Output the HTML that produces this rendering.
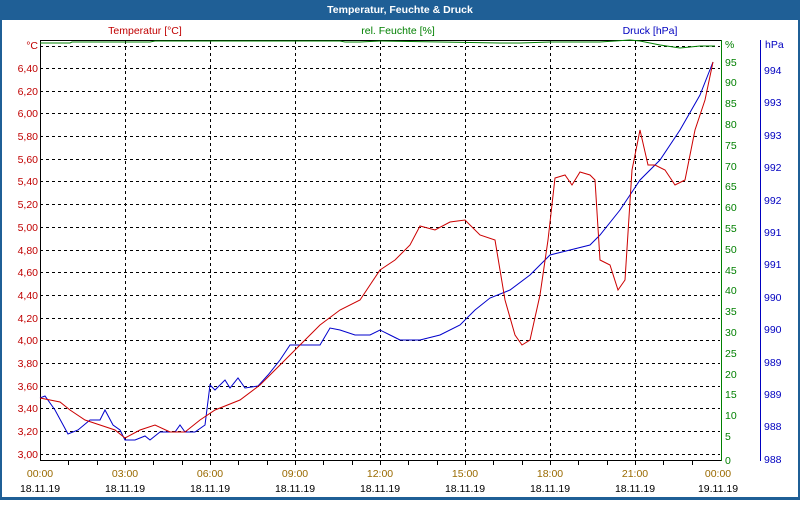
<!DOCTYPE html>
<html><head><meta charset="utf-8"><style>
body{margin:0;width:800px;height:500px;overflow:hidden;background:#fff;font-family:"Liberation Sans",sans-serif}
</style></head><body>
<svg width="800" height="500" xmlns="http://www.w3.org/2000/svg" font-family="Liberation Sans, sans-serif" font-size="10.5">
<rect x="0" y="0" width="800" height="500" fill="#1f5f96"/>
<rect x="2" y="20" width="796" height="477" fill="#fff"/>
<text x="400" y="13" text-anchor="middle" fill="#fff" font-weight="bold" font-size="10.5">Temperatur, Feuchte &amp; Druck</text>
<text x="145" y="34" text-anchor="middle" fill="#c00000">Temperatur [°C]</text>
<text x="398" y="34" text-anchor="middle" fill="#008000">rel. Feuchte [%]</text>
<text x="650" y="34" text-anchor="middle" fill="#0000c0">Druck [hPa]</text>
<g stroke="#000" stroke-dasharray="3,3" stroke-width="1">
<line x1="40" y1="46.5" x2="720" y2="46.5"/><line x1="40" y1="68.5" x2="720" y2="68.5"/><line x1="40" y1="91.5" x2="720" y2="91.5"/><line x1="40" y1="113.5" x2="720" y2="113.5"/><line x1="40" y1="136.5" x2="720" y2="136.5"/><line x1="40" y1="159.5" x2="720" y2="159.5"/><line x1="40" y1="181.5" x2="720" y2="181.5"/><line x1="40" y1="204.5" x2="720" y2="204.5"/><line x1="40" y1="227.5" x2="720" y2="227.5"/><line x1="40" y1="250.5" x2="720" y2="250.5"/><line x1="40" y1="272.5" x2="720" y2="272.5"/><line x1="40" y1="295.5" x2="720" y2="295.5"/><line x1="40" y1="318.5" x2="720" y2="318.5"/><line x1="40" y1="340.5" x2="720" y2="340.5"/><line x1="40" y1="363.5" x2="720" y2="363.5"/><line x1="40" y1="386.5" x2="720" y2="386.5"/><line x1="40" y1="408.5" x2="720" y2="408.5"/><line x1="40" y1="431.5" x2="720" y2="431.5"/><line x1="40" y1="454.5" x2="720" y2="454.5"/>
<line x1="125.5" y1="41" x2="125.5" y2="460"/><line x1="210.5" y1="41" x2="210.5" y2="460"/><line x1="295.5" y1="41" x2="295.5" y2="460"/><line x1="380.5" y1="41" x2="380.5" y2="460"/><line x1="465.5" y1="41" x2="465.5" y2="460"/><line x1="550.5" y1="41" x2="550.5" y2="460"/><line x1="635.5" y1="41" x2="635.5" y2="460"/>
</g>
<g stroke="#000">
<line x1="68.5" y1="461" x2="68.5" y2="465"/><line x1="97.5" y1="461" x2="97.5" y2="465"/><line x1="125.5" y1="461" x2="125.5" y2="465"/><line x1="153.5" y1="461" x2="153.5" y2="465"/><line x1="182.5" y1="461" x2="182.5" y2="465"/><line x1="210.5" y1="461" x2="210.5" y2="465"/><line x1="238.5" y1="461" x2="238.5" y2="465"/><line x1="267.5" y1="461" x2="267.5" y2="465"/><line x1="295.5" y1="461" x2="295.5" y2="465"/><line x1="323.5" y1="461" x2="323.5" y2="465"/><line x1="352.5" y1="461" x2="352.5" y2="465"/><line x1="380.5" y1="461" x2="380.5" y2="465"/><line x1="408.5" y1="461" x2="408.5" y2="465"/><line x1="437.5" y1="461" x2="437.5" y2="465"/><line x1="465.5" y1="461" x2="465.5" y2="465"/><line x1="493.5" y1="461" x2="493.5" y2="465"/><line x1="522.5" y1="461" x2="522.5" y2="465"/><line x1="550.5" y1="461" x2="550.5" y2="465"/><line x1="578.5" y1="461" x2="578.5" y2="465"/><line x1="607.5" y1="461" x2="607.5" y2="465"/><line x1="635.5" y1="461" x2="635.5" y2="465"/><line x1="663.5" y1="461" x2="663.5" y2="465"/><line x1="692.5" y1="461" x2="692.5" y2="465"/>
</g>
<line x1="40" y1="40.5" x2="722" y2="40.5" stroke="#000"/>
<line x1="40.5" y1="40" x2="40.5" y2="461" stroke="#000"/>
<line x1="40" y1="460.5" x2="722" y2="460.5" stroke="#000"/>
<line x1="721.5" y1="40" x2="721.5" y2="461" stroke="#008000"/>
<line x1="760.5" y1="40" x2="760.5" y2="461" stroke="#0000c0"/>
<g fill="#c00000" text-anchor="end">
<text x="38" y="49">°C</text><text x="38" y="72">6,40</text><text x="38" y="95">6,20</text><text x="38" y="117">6,00</text><text x="38" y="140">5,80</text><text x="38" y="163">5,60</text><text x="38" y="185">5,40</text><text x="38" y="208">5,20</text><text x="38" y="231">5,00</text><text x="38" y="254">4,80</text><text x="38" y="276">4,60</text><text x="38" y="299">4,40</text><text x="38" y="322">4,20</text><text x="38" y="344">4,00</text><text x="38" y="367">3,80</text><text x="38" y="390">3,60</text><text x="38" y="412">3,40</text><text x="38" y="435">3,20</text><text x="38" y="458">3,00</text>
</g>
<g fill="#008000">
<text x="725" y="48">%</text><text x="725" y="66">95</text><text x="725" y="86">90</text><text x="725" y="107">85</text><text x="725" y="128">80</text><text x="725" y="149">75</text><text x="725" y="170">70</text><text x="725" y="190">65</text><text x="725" y="211">60</text><text x="725" y="232">55</text><text x="725" y="253">50</text><text x="725" y="274">45</text><text x="725" y="294">40</text><text x="725" y="315">35</text><text x="725" y="336">30</text><text x="725" y="357">25</text><text x="725" y="378">20</text><text x="725" y="398">15</text><text x="725" y="419">10</text><text x="725" y="440">5</text><text x="725" y="464">0</text>
</g>
<g fill="#0000c0">
<text x="765" y="48">hPa</text><text x="764" y="74">994</text><text x="764" y="106">993</text><text x="764" y="139">993</text><text x="764" y="171">992</text><text x="764" y="204">992</text><text x="764" y="236">991</text><text x="764" y="268">991</text><text x="764" y="301">990</text><text x="764" y="333">990</text><text x="764" y="366">989</text><text x="764" y="398">989</text><text x="764" y="430">988</text><text x="764" y="463">988</text>
</g>
<g fill="#9a6a00" text-anchor="middle">
<text x="40" y="477">00:00</text><text x="125" y="477">03:00</text><text x="210" y="477">06:00</text><text x="295" y="477">09:00</text><text x="380" y="477">12:00</text><text x="465" y="477">15:00</text><text x="550" y="477">18:00</text><text x="635" y="477">21:00</text><text x="718" y="477">00:00</text>
</g>
<g fill="#000" text-anchor="middle">
<text x="40" y="492">18.11.19</text><text x="125" y="492">18.11.19</text><text x="210" y="492">18.11.19</text><text x="295" y="492">18.11.19</text><text x="380" y="492">18.11.19</text><text x="465" y="492">18.11.19</text><text x="550" y="492">18.11.19</text><text x="635" y="492">18.11.19</text><text x="718" y="492">19.11.19</text>
</g>
<polyline fill="none" stroke="#008000" stroke-width="1" points="40,43 70,43 72,42 150,42 155,41 245,41 255,41 340,41 345,42 360,42 380,41 500,43 520,43 550,42 600,42 630,40 640,41 660,45 680,48 700,46 715,46"/>
<polyline fill="none" stroke="#0000cc" stroke-width="1" points="40,398 45,396 55,410 68,434 78,430 90,420 100,420 105,410 113,425 120,430 125,440 135,440 145,436 150,440 160,432 175,432 180,425 185,432 195,432 205,425 210,385 215,390 225,380 230,388 238,378 245,388 258,386 268,375 280,360 290,345 300,345 320,345 330,328 340,330 355,335 370,335 380,330 390,335 400,340 420,340 440,335 460,325 475,310 490,298 510,290 530,275 550,255 570,250 590,245 600,235 620,210 640,180 660,160 680,130 700,95 713,62"/>
<polyline fill="none" stroke="#cc0000" stroke-width="1" points="40,398 60,402 70,410 85,420 100,425 115,430 125,438 140,430 155,425 170,432 185,432 200,420 215,410 240,400 260,385 280,365 300,345 320,325 340,310 360,300 380,270 395,260 410,245 420,226 435,230 450,222 465,220 480,235 495,240 505,300 515,335 522,345 530,340 540,295 548,240 555,178 565,175 572,185 580,172 590,175 595,180 600,260 610,265 618,290 625,280 632,170 640,130 648,165 655,165 665,170 675,185 685,180 695,130 705,100 713,62"/>
</svg>
</body></html>
